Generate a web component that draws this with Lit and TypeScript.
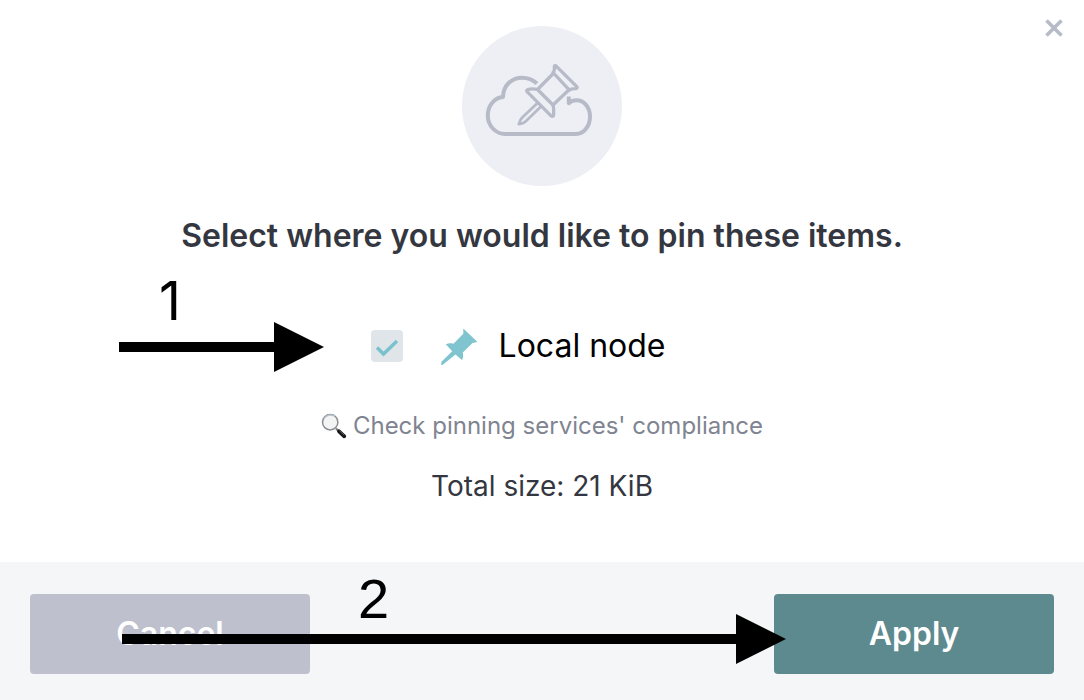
import { LitElement, html, css } from "lit";
import { customElement, property } from "lit/decorators.js";

@customElement("step-marker")
class StepMarker extends LitElement {
  @property() label = "";

  static styles = css`
    :host {
      position: absolute;
      height: 50px;
      pointer-events: none;
      color: #000;
    }
    .arrow {
      display: flex;
      align-items: center;
      height: 50px;
    }
    .shaft {
      flex: 1;
      height: 10px;
      background: currentColor;
    }
    .head {
      display: block;
      width: 50px;
      height: 50px;
      fill: currentColor;
    }
    .label {
      position: absolute;
      bottom: var(--label-bottom);
      left: var(--label-left);
      font: 400 var(--label-size) / 64px var(--label-font);
    }
  `;

  render() {
    return html`
      <span class="label">${this.label}</span>
      <div class="arrow">
        <span class="shaft"></span>
        <svg class="head" viewBox="0 0 50 50" aria-hidden="true"><path d="M0 0 50 25 0 50Z" /></svg>
      </div>
    `;
  }
}

@customElement("app-root")
class AppRoot extends LitElement {
  static styles = css`
    :host {
      display: block;
      font-family: Inter, "Liberation Sans", sans-serif;
      color: #34373f;
    }
    * {
      box-sizing: border-box;
    }
    .dialog {
      position: relative;
      display: flex;
      flex-direction: column;
      min-height: 100vh;
      background: #fff;
    }
    .close {
      position: absolute;
      top: 16px;
      right: 18px;
      display: grid;
      place-items: center;
      width: 24px;
      height: 24px;
      padding: 0;
      border: 0;
      background: none;
      color: #b7bbc8;
    }
    .close svg {
      width: 18px;
      height: 18px;
      fill: none;
      stroke: currentColor;
      stroke-width: 3.6;
    }
    .body {
      flex: 1;
      display: flex;
      flex-direction: column;
      align-items: center;
      padding: 26px 30px 0;
    }
    .badge {
      width: 160px;
      height: 160px;
      border-radius: 50%;
      background: #edeff4;
      color: #b7bbc8;
    }
    .badge svg {
      display: block;
      fill: none;
      stroke: currentColor;
      stroke-linejoin: round;
      stroke-linecap: round;
    }
    h1 {
      margin: 30px 0 0;
      font-size: 32px;
      line-height: 40px;
      font-weight: 600;
      text-align: center;
    }
    .option {
      display: flex;
      align-items: center;
      margin-top: 70px;
      padding-right: 48px;
      height: 40px;
      font-size: 32px;
      line-height: 40px;
      color: #000;
    }
    .check {
      display: grid;
      width: 32px;
      height: 32px;
    }
    .check > * {
      grid-area: 1 / 1;
      width: 32px;
      height: 32px;
      margin: 0;
    }
    .check input {
      appearance: none;
      border-radius: 4px;
      background: #dfe5e9;
    }
    .check svg {
      pointer-events: none;
      fill: none;
      stroke: #79c2cd;
      stroke-width: 3.4;
      visibility: hidden;
    }
    .check input:checked + svg {
      visibility: visible;
    }
    .pin {
      width: 37px;
      height: 37px;
      margin: 0 21px 0 38px;
      fill: #7fc4cf;
    }
    .compliance {
      display: flex;
      align-items: center;
      gap: 6px;
      margin-top: 44px;
      font-size: 24px;
      line-height: 32px;
      color: #7f8491;
      text-decoration: none;
    }
    .compliance svg {
      width: 26px;
      height: 26px;
    }
    .total {
      margin: 26px 0 0;
      font-size: 28px;
      line-height: 36px;
    }
    .footer {
      display: flex;
      justify-content: space-between;
      padding: 32px 30px 26px;
      background: #f4f6f8;
    }
    .btn {
      width: 280px;
      height: 80px;
      padding: 0;
      border: 0;
      border-radius: 4px;
      font: 600 32px/40px Inter, "Liberation Sans", sans-serif;
      color: #fff;
    }
    .cancel {
      background: #bec0cd;
    }
    .apply {
      background: #5c8a8f;
    }
    .step-one {
      top: 322px;
      left: 119px;
      width: 205px;
      --label-left: 40px;
      --label-bottom: 39px;
      --label-size: 54px;
      --label-font: Inter, sans-serif;
    }
    .step-two {
      bottom: 36px;
      left: 122px;
      right: 298px;
      --label-left: 236px;
      --label-bottom: 33px;
      --label-size: 56px;
      --label-font: "Liberation Sans", Arial, sans-serif;
    }
  `;

  render() {
    return html`
      <main class="dialog" role="dialog" aria-labelledby="title">
        <div class="body">
          <div class="badge">
            <svg width="160" height="160" viewBox="0 0 160 160" aria-hidden="true">
              <path stroke-width="4" stroke-linecap="butt" d="M75 57.500C70.500 53.500 65.500 51.700 60 51.700C49.500 51.700 41.200 59.500 41 71C32.500 71.500 25.800 79.500 25.800 89.500C25.800 99.500 33.500 108 43 108H114C122 108 128 100 128 90.500C128 81 122 74.300 114.500 74.300C111.500 74.300 109 75.200 106.800 77.200V70.500" />
              <path stroke-width="3.300" d="M91 46.500C93 44.500 92.500 42 92.300 40.600C92.300 39.600 93.600 39.400 94.200 40.100L114.800 60.600C115.800 61.700 114.800 62.700 113.500 62.700C111 62.700 109 62.600 107.400 64.200Z" />
              <path stroke-width="3.300" d="M90.800 48 75.500 63.500 91 79 106.500 64.200" />
              <path stroke-width="3.300" d="M75.500 63.500C72.500 62.800 67.500 63 65.500 63.800C64.400 64.300 64.500 65 65.300 65.800L88.800 89.600C90 90.800 91.500 90.600 91.600 89C91.700 85.500 92 82 91 79" />
              <path stroke-width="2.800" d="M75.500 77 60 91.800C58.200 93.600 57.500 96 56.800 98.200C59.500 97.800 62 97 63.500 95.500L79 80.500" />
            </svg>
          </div>
          <h1 id="title">Select where you would like to pin these items.</h1>
          <label class="option">
            <span class="check">
              <input type="checkbox" checked />
              <svg viewBox="0 0 32 32" aria-hidden="true"><path d="M6 17.500 12.500 24 26 11" /></svg>
            </span>
            <svg class="pin" viewBox="0 0 37 37" aria-hidden="true">
              <path d="M22.300.5 36.500 14 31.500 15 21.800 24.500C22.500 27.500 22.300 30 21 32L14.500 26.500 1.800 36.800H0L.5 33.800 11.200 23.300 4.800 16.300C7.500 15 10 15 12.500 15.700L22.300 5.700Z" />
            </svg>
            <span>Local node</span>
          </label>
          <a class="compliance" href="#">
            <svg viewBox="0 0 26 26" aria-hidden="true">
              <path d="M15 15.500 18.500 19" stroke="#777" stroke-width="2" />
              <path d="M18 18.300 23.300 23.300" stroke="#15171a" stroke-width="3.800" stroke-linecap="round" />
              <path d="M18.500 17.700 23 22" stroke="#555b60" stroke-width="1" />
              <circle cx="9.200" cy="9.200" r="7.700" fill="#f3f4f4" stroke="#8b8f93" stroke-width="1.500" />
              <path d="M3 6A7.500 7.500 0 0 1 14 3.300" fill="none" stroke="#b7c6d2" stroke-width="1.200" />
            </svg>
            <span>Check pinning services' compliance</span>
          </a>
          <p class="total">Total size: 21 KiB</p>
        </div>
        <footer class="footer">
          <button class="btn cancel" type="button">Cancel</button>
          <button class="btn apply" type="button">Apply</button>
        </footer>
        <button class="close" type="button" aria-label="Close">
          <svg viewBox="0 0 18 18" aria-hidden="true"><path d="M1.500 1.500 16.500 16.500M16.500 1.500 1.500 16.500" /></svg>
        </button>
        <step-marker class="step-one" label="1"></step-marker>
        <step-marker class="step-two" label="2"></step-marker>
      </main>
    `;
  }
}
